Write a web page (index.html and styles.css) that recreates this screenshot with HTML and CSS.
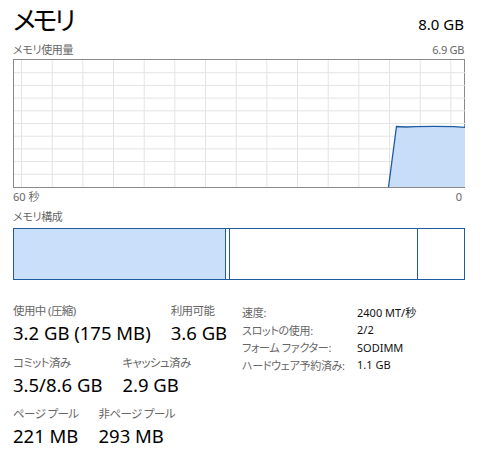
FILE: index.html
```html
<!DOCTYPE html>
<html lang="ja">
<head>
<meta charset="utf-8">
<link rel="stylesheet" href="styles.css">
</head>
<body>
<div class="panel">
  <div class="head">
    <h1 class="title">メモリ</h1>
    <span class="total">8.0 GB</span>
  </div>
  <div class="subhead">
    <span>メモリ使用量</span>
    <span>6.9 GB</span>
  </div>
  <div class="graph">
    <svg width="451" height="127" viewBox="0 0 451 127">
      <g class="grid">
        <line x1="0" y1="12.7" x2="451" y2="12.7"/>
        <line x1="0" y1="25.4" x2="451" y2="25.4"/>
        <line x1="0" y1="38.1" x2="451" y2="38.1"/>
        <line x1="0" y1="50.8" x2="451" y2="50.8"/>
        <line x1="0" y1="63.5" x2="451" y2="63.5"/>
        <line x1="0" y1="76.2" x2="451" y2="76.2"/>
        <line x1="0" y1="88.9" x2="451" y2="88.9"/>
        <line x1="0" y1="101.6" x2="451" y2="101.6"/>
        <line x1="0" y1="114.3" x2="451" y2="114.3"/>
        <line x1="7.5" y1="0" x2="7.5" y2="127"/>
        <line x1="38.2" y1="0" x2="38.2" y2="127"/>
        <line x1="68.8" y1="0" x2="68.8" y2="127"/>
        <line x1="99.5" y1="0" x2="99.5" y2="127"/>
        <line x1="130.2" y1="0" x2="130.2" y2="127"/>
        <line x1="160.8" y1="0" x2="160.8" y2="127"/>
        <line x1="191.5" y1="0" x2="191.5" y2="127"/>
        <line x1="222.2" y1="0" x2="222.2" y2="127"/>
        <line x1="252.8" y1="0" x2="252.8" y2="127"/>
        <line x1="283.5" y1="0" x2="283.5" y2="127"/>
        <line x1="314.2" y1="0" x2="314.2" y2="127"/>
        <line x1="344.8" y1="0" x2="344.8" y2="127"/>
        <line x1="375.5" y1="0" x2="375.5" y2="127"/>
        <line x1="406.2" y1="0" x2="406.2" y2="127"/>
        <line x1="436.8" y1="0" x2="436.8" y2="127"/>
      </g>
      <polygon class="area" points="374.5,127 382.5,66.5 392,67 401,66.6 420,66.4 440,66.6 451,67.4 451,127"/>
      <polyline class="line" points="374.5,127 382.5,66.5 392,67 401,66.6 420,66.4 440,66.6 451,67.4"/>
    </svg>
  </div>
  <div class="axis">
    <span>60 秒</span>
    <span class="zero">0</span>
  </div>
  <div class="label comp-label">メモリ構成</div>
  <div class="comp">
    <div class="seg used"></div>
    <div class="seg modified"></div>
    <div class="seg standby"></div>
    <div class="seg free"></div>
  </div>
  <div class="stats">
    <div class="left">
      <div class="row">
        <div class="stat"><div class="label">使用中 (圧縮)</div><div class="value">3.2 GB (175 MB)</div></div>
        <div class="stat"><div class="label">利用可能</div><div class="value">3.6 GB</div></div>
      </div>
      <div class="row">
        <div class="stat"><div class="label">コミット済み</div><div class="value">3.5/8.6 GB</div></div>
        <div class="stat"><div class="label">キャッシュ済み</div><div class="value">2.9 GB</div></div>
      </div>
      <div class="row">
        <div class="stat"><div class="label">ページ プール</div><div class="value">221 MB</div></div>
        <div class="stat"><div class="label">非ページ プール</div><div class="value">293 MB</div></div>
      </div>
    </div>
    <dl class="props">
      <dt>速度:</dt><dd>2400 MT/秒</dd>
      <dt>スロットの使用:</dt><dd>2/2</dd>
      <dt>フォーム ファクター:</dt><dd>SODIMM</dd>
      <dt>ハードウェア予約済み:</dt><dd>1.1 GB</dd>
    </dl>
  </div>
</div>
</body>
</html>
```

FILE: styles.css
```css
* { box-sizing: border-box; }
html, body { margin: 0; padding: 0; background: #ffffff; }
body {
  font-family: "Noto Sans", "Noto Sans CJK JP", sans-serif;
  font-feature-settings: "palt";
  color: #000;
}
.panel {
  width: 487px;
  height: 468px;
  padding: 0 22px 0 13px;
}
.head {
  display: flex;
  justify-content: space-between;
  align-items: baseline;
  height: 42px;
}
.title {
  margin: 0;
  font-weight: 400;
  font-size: 26px;
  line-height: 41px;
  letter-spacing: -3px;
}
.total {
  font-size: 15px;
  padding-right: 1px;
}
.subhead {
  display: flex;
  justify-content: space-between;
  font-size: 11px;
  line-height: 16px;
  color: #666;
  height: 17px;
  padding-right: 1px;
  letter-spacing: -0.3px;
}
.graph {
  width: 452px;
  height: 129px;
  border: 1px solid #8a8a8a;
}
.graph svg { display: block; }
.grid line { stroke: #e4e4e4; stroke-width: 1; }
.area { fill: #c7ddf8; }
.line { fill: none; stroke: #1f5ba3; stroke-width: 1.3; }
.axis {
  display: flex;
  justify-content: space-between;
  font-size: 11px;
  line-height: 14px;
  color: #666;
  height: 21px;
  padding-top: 2px;
  padding-right: 3px;
}
.label {
  font-size: 11.5px;
  letter-spacing: -0.6px;
  color: #666;
  line-height: 16px;
}
.comp-label {
  font-size: 11px;
  letter-spacing: -0.3px;
  height: 19px;
}
.comp {
  display: flex;
  width: 452px;
  height: 52px;
  border: 1px solid #1f5b9f;
}
.seg { height: 100%; }
.used { width: 212px; background: #cae0fa; border-right: 1px solid #1f5b9f; }
.modified { width: 4px; border-right: 1px solid #1f5b9f; }
.standby { width: 188px; border-right: 1px solid #1f5b9f; }
.free { flex: 1; }
.stats {
  display: flex;
  margin-top: 23px;
}
.left {
  width: 229px;
  display: flex;
  flex-direction: column;
  gap: 8.5px;
}
.row {
  display: flex;
  gap: 20px;
}
.value {
  font-size: 18.5px;
  line-height: 27px;
  color: #000;
  white-space: nowrap;
}
.props {
  margin: 0;
  display: grid;
  grid-template-columns: 115px auto;
  grid-auto-rows: 17.7px;
  font-size: 11px;
  align-items: center;
}
.props dt { color: #666; letter-spacing: -0.3px; }
.props dd { margin: 0; color: #111; }
```
